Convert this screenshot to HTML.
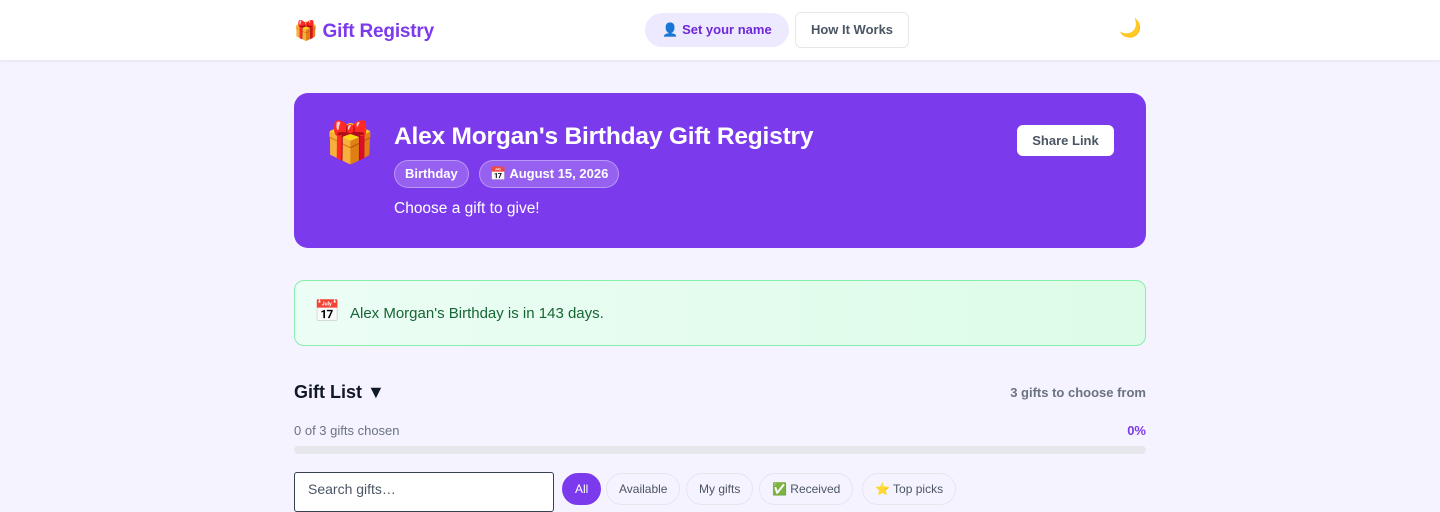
<!DOCTYPE html>
<html><head><meta charset="utf-8"><style>
*{box-sizing:border-box;margin:0;padding:0}
body{width:1440px;height:500px;overflow:hidden;background:#f5f3ff;font-family:"Liberation Sans","Noto Sans CJK SC",sans-serif;color:#1f2937}
.hdr{position:absolute;left:0;top:0;width:1440px;height:60px;background:#fff;box-shadow:0 1px 3px rgba(0,0,0,.08)}
.logo{position:absolute;left:294px;top:19px;font-size:19px;font-weight:bold;color:#7c3aed;letter-spacing:-0.2px}
.nm{position:absolute;left:645px;top:13px;width:144px;height:34px;border-radius:17px;background:#ede9fe;color:#6d28d9;font-size:13px;font-weight:bold;line-height:34px;text-align:center}
.hw{position:absolute;left:795px;top:12px;width:114px;height:36px;border:1px solid #e5e7eb;border-radius:6px;background:#fff;color:#4b5563;font-size:13px;font-weight:bold;line-height:34px;text-align:center}
.moon{position:absolute;left:1119px;top:18px;font-size:18px}
.hero{position:absolute;left:294px;top:93px;width:852px;height:155px;border-radius:14px;background:#7c3aed;color:#fff}
.gift{position:absolute;left:31px;top:26px;font-size:40px}
.h1{position:absolute;left:100px;top:30px;font-size:24.5px;font-weight:bold;letter-spacing:-0.2px}
.tag{position:absolute;top:67px;height:28px;border:1px solid rgba(255,255,255,.35);background:rgba(255,255,255,.2);border-radius:14px;font-size:13px;font-weight:bold;line-height:26px;padding:0 10px}
.sub{position:absolute;left:100px;top:107px;font-size:15.5px}
.share{position:absolute;right:32px;top:32px;width:97px;height:31px;background:#fff;border-radius:6px;color:#4b5563;font-size:13px;font-weight:bold;line-height:31px;text-align:center}
.cd{position:absolute;left:294px;top:280px;width:852px;height:66px;border:1px solid #86efac;border-radius:10px;background:linear-gradient(90deg,#ecfdf5,#dcfce7)}
.cd span{position:absolute;left:55px;top:24px;font-size:15px;color:#166534}
.cd i{position:absolute;left:19px;top:19px;font-size:21px;font-style:normal}
.gl{position:absolute;left:294px;top:382px;font-size:18px;font-weight:bold;color:#111827}
.cnt{position:absolute;right:294px;top:385px;font-size:13px;font-weight:bold;color:#6b7280}
.ch{position:absolute;left:294px;top:423px;font-size:13px;color:#6b7280}
.pc{position:absolute;right:294px;top:423px;font-size:13px;font-weight:bold;color:#7c3aed}
.bar{position:absolute;left:294px;top:446px;width:852px;height:8px;border-radius:4px;background:#e5e7eb}
.srch{position:absolute;left:294px;top:472px;width:260px;height:40px;border:1px solid #374151;border-radius:3px;background:#fff;font-size:14px;color:#4b5563;padding:8px 13px}
.f{position:absolute;top:473px;height:32px;border:1px solid #e5e7eb;border-radius:16px;background:#f5f3ff;font-size:12px;color:#4b5563;line-height:30px;padding:0 12px}
</style></head><body>
<div class="hdr">
<div class="logo">🎁 Gift Registry</div>
<div class="nm">👤 Set your name</div>
<div class="hw">How It Works</div>
<div class="moon">🌙</div>
</div>
<div class="hero">
<div class="gift">🎁</div>
<div class="h1">Alex Morgan's Birthday Gift Registry</div>
<div class="tag" style="left:100px">Birthday</div>
<div class="tag" style="left:185px">📅 August 15, 2026</div>
<div class="sub">Choose a gift to give!</div>
<div class="share">Share Link</div>
</div>
<div class="cd"><i>📅</i><span>Alex Morgan's Birthday is in 143 days.</span></div>
<div class="gl">Gift List ▼</div>
<div class="cnt">3 gifts to choose from</div>
<div class="ch">0 of 3 gifts chosen</div>
<div class="pc">0%</div>
<div class="bar"></div>
<div class="srch">Search gifts…</div>
<div class="f" style="left:562px;background:#7c3aed;color:#fff;border-color:#7c3aed">All</div>
<div class="f" style="left:606px">Available</div>
<div class="f" style="left:686px">My gifts</div>
<div class="f" style="left:759px">✅ Received</div>
<div class="f" style="left:862px">⭐ Top picks</div>
</body></html>
